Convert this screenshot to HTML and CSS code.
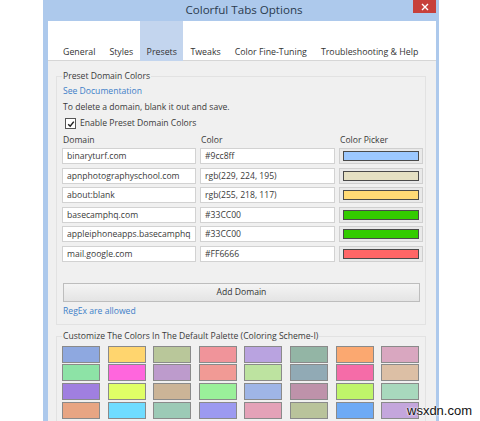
FILE: index.html
```html
<!DOCTYPE html>
<html>
<head>
<meta charset="utf-8">
<link rel="stylesheet" href="styles.css">
</head>
<body>
<div class="window">
  <div class="titlebar">
    <span class="title">Colorful Tabs Options</span>
    <span class="close">
      <svg width="8" height="8" viewBox="0 0 8 8"><path d="M1 1 L7 7 M7 1 L1 7" stroke="#fff" stroke-width="1.4"/></svg>
    </span>
  </div>
  <div class="tabs">
    <span class="tab first">General</span>
    <span class="tab">Styles</span>
    <span class="tab active">Presets</span>
    <span class="tab">Tweaks</span>
    <span class="tab">Color Fine-Tuning</span>
    <span class="tab">Troubleshooting &amp; Help</span>
  </div>
  <div class="content">
    <fieldset class="group">
      <legend>Preset Domain Colors</legend>
      <div class="line link">See Documentation</div>
      <div class="line">To delete a domain, blank it out and save.</div>
      <div class="line check">
        <span class="box"><svg width="8" height="8" viewBox="0 0 8 8"><path d="M1.2 4.2 L3.2 6.2 L6.8 1.6" fill="none" stroke="#222" stroke-width="1.5"/></svg></span>
        Enable Preset Domain Colors
      </div>
      <div class="grid">
        <div class="hdr">Domain</div>
        <div class="hdr">Color</div>
        <div class="hdr">Color Picker</div>

        <div class="inp">binaryturf.com</div>
        <div class="inp">#9cc8ff</div>
        <div class="picker"><span class="sw" style="background:#9cc8ff"></span></div>

        <div class="inp">apnphotographyschool.com</div>
        <div class="inp">rgb(229, 224, 195)</div>
        <div class="picker"><span class="sw" style="background:rgb(229,224,195)"></span></div>

        <div class="inp">about:blank</div>
        <div class="inp">rgb(255, 218, 117)</div>
        <div class="picker"><span class="sw" style="background:rgb(255,218,117)"></span></div>

        <div class="inp">basecamphq.com</div>
        <div class="inp">#33CC00</div>
        <div class="picker"><span class="sw" style="background:#33CC00"></span></div>

        <div class="inp"><span class="clip">appleiphoneapps.basecamphq.com</span></div>
        <div class="inp">#33CC00</div>
        <div class="picker"><span class="sw" style="background:#33CC00"></span></div>

        <div class="inp">mail.google.com</div>
        <div class="inp">#FF6666</div>
        <div class="picker"><span class="sw" style="background:#FF6666"></span></div>
      </div>
      <div class="button">Add Domain</div>
      <div class="line link">RegEx are allowed</div>
    </fieldset>
    <fieldset class="group palette">
      <legend>Customize The Colors In The Default Palette (Coloring Scheme-I)</legend>
      <div class="swatches">
        <span style="background:#8ea8e0"></span>
        <span style="background:#ffd56e"></span>
        <span style="background:#b9c79a"></span>
        <span style="background:#f0949a"></span>
        <span style="background:#b9a3e0"></span>
        <span style="background:#93b5a5"></span>
        <span style="background:#fba870"></span>
        <span style="background:#d9a7c0"></span>

        <span style="background:#8de3a6"></span>
        <span style="background:#ff66dd"></span>
        <span style="background:#bd9bcc"></span>
        <span style="background:#f19a95"></span>
        <span style="background:#bde3a0"></span>
        <span style="background:#91aab5"></span>
        <span style="background:#f56ca8"></span>
        <span style="background:#dcbfa5"></span>

        <span style="background:#a07fe0"></span>
        <span style="background:#e0ff66"></span>
        <span style="background:#cbb497"></span>
        <span style="background:#9af09a"></span>
        <span style="background:#9fb5e6"></span>
        <span style="background:#be92aa"></span>
        <span style="background:#bff56a"></span>
        <span style="background:#a8d8bd"></span>

        <span style="background:#e8a583"></span>
        <span style="background:#6fdcff"></span>
        <span style="background:#9ccab6"></span>
        <span style="background:#9c9af0"></span>
        <span style="background:#e4a2b8"></span>
        <span style="background:#b9c39b"></span>
        <span style="background:#6eaaf5"></span>
        <span style="background:#c4a6dc"></span>
      </div>
    </fieldset>
  </div>
</div>
<div class="watermark">wsxdn.com</div>
</body>
</html>
```
FILE: styles.css
```css
html, body {
  margin: 0;
  padding: 0;
  background: #fff;
  height: 421px;
  overflow: hidden;
  font-family: "Open Sans", "Noto Sans", sans-serif;
  color: #3a3a3a;
}
.window {
  position: relative;
  margin-left: 43px;
  width: 396px;
  height: 440px;
  background: #adc9ec;
  box-sizing: border-box;
  padding: 0 3px 0 5px;
  display: flex;
  flex-direction: column;
}
.titlebar {
  height: 21px;
  display: flex;
  align-items: center;
  justify-content: center;
}
.title {
  font-size: 11.6px;
  color: #2b3b4e;
  margin-top: -2px;
  margin-left: 4px;
}
.close {
  position: absolute;
  top: 0;
  right: 3px;
  width: 23px;
  height: 13px;
  background: #c7403a;
  display: flex;
  align-items: center;
  justify-content: center;
}
.tabs {
  height: 39px;
  background: #fff;
  border-bottom: 1px solid #d6d6d6;
  display: flex;
  align-items: flex-end;
  font-size: 8.8px;
  color: #333;
}
.tab {
  padding: 0 7px 0;
  line-height: 15px;
}
.tab.first { margin-left: 8px; }
.tab.active {
  background: #c3d5ee;
  height: 40px;
  box-sizing: border-box;
  display: flex;
  align-items: flex-end;
  margin-bottom: -1px;
  padding: 0 6.5px 1px;
}
.content {
  flex: 1;
  background: #f0f0f0;
  padding: 8px 10px 0 8px;
  font-size: 8.6px;
}
.group {
  margin: 0;
  border: 1px solid #e2e2e2;
  padding: 0 2px 4px 5px;
  min-width: 0;
}
.group legend {
  padding: 0 1px;
  margin-left: 0;
  line-height: 15px;
  color: #3a3a3a;
}
.line {
  line-height: 15.5px;
  height: 15.5px;
  padding-left: 1px;
}
.link { color: #3d7fc8; }
.check {
  display: flex;
  align-items: center;
  padding-left: 3px;
  gap: 4px;
  margin-top: 1px;
}
.box {
  width: 9px;
  height: 9px;
  border: 1px solid #555;
  background: #fff;
  display: flex;
  align-items: center;
  justify-content: center;
}
.grid {
  display: grid;
  grid-template-columns: 134px 135px 84px;
  column-gap: 4px;
  row-gap: 3.6px;
  margin-top: 1px;
}
.hdr {
  line-height: 14px;
  margin-bottom: -2px;
  padding-left: 1px;
}
.inp {
  height: 16px;
  box-sizing: border-box;
  border: 1px solid #d2d2d2;
  background: #fff;
  line-height: 14px;
  padding-left: 4px;
  white-space: nowrap;
  overflow: hidden;
  color: #3a3a3a;
}
.clip {
  display: block;
  width: 124px;
  overflow: hidden;
}
.picker {
  height: 16px;
  box-sizing: border-box;
  border: 1px solid #cfcfcf;
  background: #e9e9e9;
  padding: 2px 3px;
  display: flex;
}
.sw {
  flex: 1;
  border: 1px solid #4a4a4a;
}
.button {
  margin: 21px 3px 0 1px;
  height: 19px;
  box-sizing: border-box;
  border: 1px solid #bdbdbd;
  background: linear-gradient(#f4f4f4, #e4e4e4);
  text-align: center;
  line-height: 17px;
  color: #333;
}
.button + .line { margin-top: 2px; }
.palette {
  margin-top: 4px;
  padding: 0 3px 10px 5px;
}
.swatches {
  display: grid;
  grid-template-columns: repeat(8, 38px);
  column-gap: 7.6px;
  row-gap: 1.7px;
  margin-top: 2px;
}
.swatches span {
  height: 17px;
  box-sizing: border-box;
  border: 1px solid #8a8a8a;
}
.watermark {
  position: absolute;
  left: 407px;
  top: 403px;
  font-family: "Liberation Sans", Arial, sans-serif;
  font-size: 13px;
  color: #111;
  text-shadow: 0 0 2px #fff, 0 0 2px #fff;
}
```
